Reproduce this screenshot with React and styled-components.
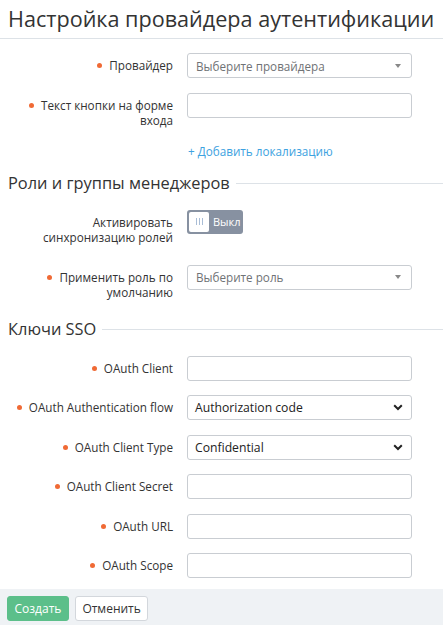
import React, { useState } from 'react';
import styled, { createGlobalStyle } from 'styled-components';

const GlobalStyle = createGlobalStyle`
  html, body {
    margin: 0;
    padding: 0;
    background: #fff;
  }
  body {
    font-family: 'Open Sans', 'Liberation Sans', sans-serif;
    color: #333;
    font-size: 11.7px;
  }
`;

const Page = styled.div`
  width: 443px;
  min-height: 625px;
  display: flex;
  flex-direction: column;
`;

const Header = styled.header`
  padding: 0 8px;
  height: 38px;
  border-bottom: 1px solid #dde2e7;
  display: flex;
  align-items: center;
`;

const Title = styled.h1`
  margin: 0;
  font-size: 21.6px;
  font-weight: 400;
  color: #333;
  line-height: 30px;
  white-space: nowrap;
`;

const Body = styled.main`
  flex: 1;
  padding-top: 14px;
`;

const Row = styled.div`
  display: grid;
  grid-template-columns: 165px 225px;
  column-gap: 14px;
  padding-left: 8px;
  align-items: start;
  margin-bottom: ${(p) => p.$gap || 14.5}px;
`;

const Label = styled.label`
  text-align: right;
  line-height: 15px;
  padding-top: 5px;
  color: #333;
`;

const Dot = styled.span`
  display: inline-block;
  width: 5px;
  height: 5px;
  border-radius: 50%;
  background: #f06a35;
  margin-right: 7px;
  vertical-align: 2px;
`;

const TextInput = styled.input`
  box-sizing: border-box;
  width: 100%;
  height: 25px;
  border: 1px solid #c9cdd2;
  border-radius: 3px;
  background: #fff;
  font: inherit;
  padding: 0 8px;
  margin: 0;
`;

const SelectBox = styled.div`
  box-sizing: border-box;
  height: 25px;
  border: 1px solid #c9cdd2;
  border-radius: 3px;
  background: #fff;
  display: flex;
  align-items: center;
  justify-content: space-between;
  padding: 0 8px 0 ${(p) => (p.$native ? 7 : 8)}px;
  color: ${(p) => (p.$placeholder ? '#6f7275' : '#222')};
  font-size: ${(p) => (p.$native ? 12.2 : 11.7)}px;
`;

const Caret = styled.span`
  width: 0;
  height: 0;
  border-left: 3.5px solid transparent;
  border-right: 3.5px solid transparent;
  border-top: 4px solid #888;
  margin-right: 2px;
`;

const AddLink = styled.a`
  grid-column: 2;
  color: #3da2e0;
  line-height: 17px;
  text-decoration: none;
  padding-left: 1px;
  cursor: pointer;
`;

const SectionTitle = styled.h2`
  display: flex;
  align-items: center;
  gap: 6px;
  margin: 0 0 17px;
  padding-left: 8px;
  font-size: 16.4px;
  font-weight: 400;
  line-height: 20px;
  color: #333;
  &::after {
    content: '';
    flex: 1;
    height: 1px;
    background: #dde2e7;
    margin-top: 2px;
  }
`;

const Toggle = styled.button`
  width: 56px;
  height: 24px;
  border: none;
  border-radius: 3px;
  background: #8791a1;
  padding: 2px;
  display: flex;
  align-items: center;
  gap: 4px;
  color: #fff;
  font: inherit;
  font-size: 11px;
  cursor: pointer;
`;

const Knob = styled.span`
  width: 20px;
  height: 20px;
  border-radius: 2px;
  background: #fff;
  display: flex;
  align-items: center;
  justify-content: center;
  gap: 2px;
  & i {
    width: 1px;
    height: 7px;
    background: #a9bdd6;
  }
`;

const Footer = styled.footer`
  background: #eff2f5;
  padding: 7px 7px 5px;
  display: flex;
  gap: 6px;
`;

const Button = styled.button`
  height: 25px;
  padding: 0 6.5px;
  border-radius: 3px;
  font: inherit;
  font-size: 12px;
  cursor: pointer;
  border: 1px solid ${(p) => (p.$primary ? '#5cbf8a' : '#d3d7dc')};
  background: ${(p) => (p.$primary ? '#5cbf8a' : '#fff')};
  color: ${(p) => (p.$primary ? '#fff' : '#333')};
`;

const Chevron = () => (
  <svg width="10" height="7" viewBox="0 0 10 7">
    <path d="M1.2 1.3 L5 5 L8.8 1.3" fill="none" stroke="#222" strokeWidth="2" />
  </svg>
);

const Field = ({ label, required, children, gap }) => (
  <Row $gap={gap}>
    <Label>
      {required && <Dot />}
      {label}
    </Label>
    {children}
  </Row>
);

export default function App() {
  const [sync, setSync] = useState(false);

  return (
    <>
      <GlobalStyle />
      <Page>
        <Header>
          <Title>Настройка провайдера аутентификации</Title>
        </Header>
        <Body>
          <Field label="Провайдер" required>
            <SelectBox $placeholder>
              Выберите провайдера
              <Caret />
            </SelectBox>
          </Field>
          <Field label="Текст кнопки на форме входа" required gap={15}>
            <TextInput />
          </Field>
          <Row $gap={13}>
            <AddLink>+ Добавить локализацию</AddLink>
          </Row>

          <SectionTitle>Роли и группы менеджеров</SectionTitle>
          <Field label="Активировать синхронизацию ролей" gap={20}>
            <Toggle onClick={() => setSync(!sync)}>
              <Knob>
                <i />
                <i />
                <i />
              </Knob>
              {sync ? 'Вкл' : 'Выкл'}
            </Toggle>
          </Field>
          <Field label="Применить роль по умолчанию" required gap={19}>
            <SelectBox $placeholder>
              Выберите роль
              <Caret />
            </SelectBox>
          </Field>

          <SectionTitle>Ключи SSO</SectionTitle>
          <Field label="OAuth Client" required>
            <TextInput />
          </Field>
          <Field label="OAuth Authentication flow" required>
            <SelectBox $native>
              Authorization code
              <Chevron />
            </SelectBox>
          </Field>
          <Field label="OAuth Client Type" required>
            <SelectBox $native>
              Confidential
              <Chevron />
            </SelectBox>
          </Field>
          <Field label="OAuth Client Secret" required>
            <TextInput />
          </Field>
          <Field label="OAuth URL" required>
            <TextInput />
          </Field>
          <Field label="OAuth Scope" required gap={11}>
            <TextInput />
          </Field>
        </Body>
        <Footer>
          <Button $primary>Создать</Button>
          <Button>Отменить</Button>
        </Footer>
      </Page>
    </>
  );
}
